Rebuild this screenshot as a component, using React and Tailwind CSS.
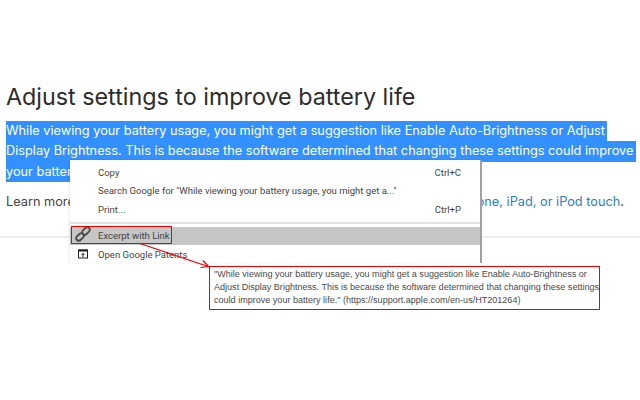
const MenuRow = ({ label, shortcut }) => (
  <div className="flex h-[18.5px] items-center justify-between pl-[28px] pr-[19px]">
    <span>{label}</span>
    {shortcut && <span>{shortcut}</span>}
  </div>
);

export default function App() {
  return (
    <div className="relative h-[400px] w-[640px] overflow-hidden bg-white font-['Inter',sans-serif] text-[#333]">
      <div className="pl-[6px] pt-[81px]">
        <h1 className="text-[23.3px] font-normal leading-[32px] text-[#2c2c2c]">
          Adjust settings to improve battery life
        </h1>
        <div className="mt-[8px] text-[12.75px] leading-[20.4px] text-white">
          <div className="w-[601px] whitespace-nowrap bg-[#3390ff]">
            While viewing your battery usage, you might get a suggestion like Enable Auto-Brightness or Adjust
          </div>
          <div className="w-[630px] whitespace-nowrap bg-[#3390ff]">
            Display Brightness. This is because the software determined that changing these settings could improve
          </div>
          <div className="w-[200px] whitespace-nowrap bg-[#3390ff]">your battery life.</div>
        </div>
        <p className="mt-[10px] flex w-[618px] justify-between whitespace-nowrap text-[12.75px] leading-[20.4px] text-[#444]">
          <span>Learn more</span>
          <span>
            <span className="text-[#2a7fc9]">one, iPad, or iPod touch</span>.
          </span>
        </p>
        <div className="-ml-[6px] mt-[23px] h-[2px] w-[640px] bg-[#eeeeee]" />
      </div>

      {/* context menu */}
      <div className="absolute left-[70px] top-[160px] h-[103px] w-[412px] overflow-hidden border-r-[2px] border-r-[#a0a0a0] bg-white pt-[3.5px] font-['Roboto',sans-serif] text-[9.5px] text-[#444] shadow-[-1px_0_2px_rgba(0,0,0,0.08)]">
        <MenuRow label="Copy" shortcut="Ctrl+C" />
        <MenuRow label={'Search Google for "While viewing your battery usage, you might get a..."'} />
        <MenuRow label="Print..." shortcut="Ctrl+P" />
        <div className="my-[3px] h-[2px] bg-[#e2e2e2]" />
        <div className="flex h-[18px] items-center bg-[#c6c6c6] pl-[28px] text-[#444]">Excerpt with Link</div>
        <div className="mt-[1px] flex h-[18px] items-center pl-[28px]">Open Google Patents</div>
      </div>

      {/* link icon */}
      <svg className="absolute left-[75px] top-[226px]" width="16" height="16" viewBox="0 0 16 16" fill="none" stroke="#4a4a4a" strokeWidth="1.8">
        <rect x="0.75" y="8.5" width="8.5" height="5" rx="2.5" transform="rotate(-45 5 11)" />
        <rect x="6.75" y="2.5" width="8.5" height="5" rx="2.5" transform="rotate(-45 11 5)" />
      </svg>
      <svg className="absolute left-[78px] top-[249px]" width="10" height="10" viewBox="0 0 10 10" fill="none">
        <rect x="0.5" y="1" width="9" height="8" stroke="#222" strokeWidth="1" />
        <rect x="0.5" y="0.5" width="9" height="2" fill="#222" />
        <path d="M5 8V4.5M3.5 6 5 4.5 6.5 6" stroke="#222" strokeWidth="1" />
      </svg>

      {/* annotations */}
      <div className="absolute left-[71px] top-[226px] h-[18px] w-[101px] border border-[#f00000]" />
      <svg className="absolute left-[138px] top-[242px]" width="74" height="28" viewBox="0 0 74 28" fill="none" stroke="#f00000" strokeWidth="1.2">
        <path d="M2 1.5 70 24.5M65 18.5l5.5 6-8 1" />
      </svg>
      <div className="absolute left-[209px] top-[266px] h-[44px] w-[391px] whitespace-nowrap border border-[#f00000] bg-white pl-[4px] pt-[1px] font-['Liberation_Sans',sans-serif] text-[9.05px] leading-[13.2px] text-[#4a4a4a]">
        <div>"While viewing your battery usage, you might get a suggestion like Enable Auto-Brightness or</div>
        <div>Adjust Display Brightness. This is because the software determined that changing these settings</div>
        <div>could improve your battery life." (https://support.apple.com/en-us/HT201264)</div>
      </div>
    </div>
  );
}
